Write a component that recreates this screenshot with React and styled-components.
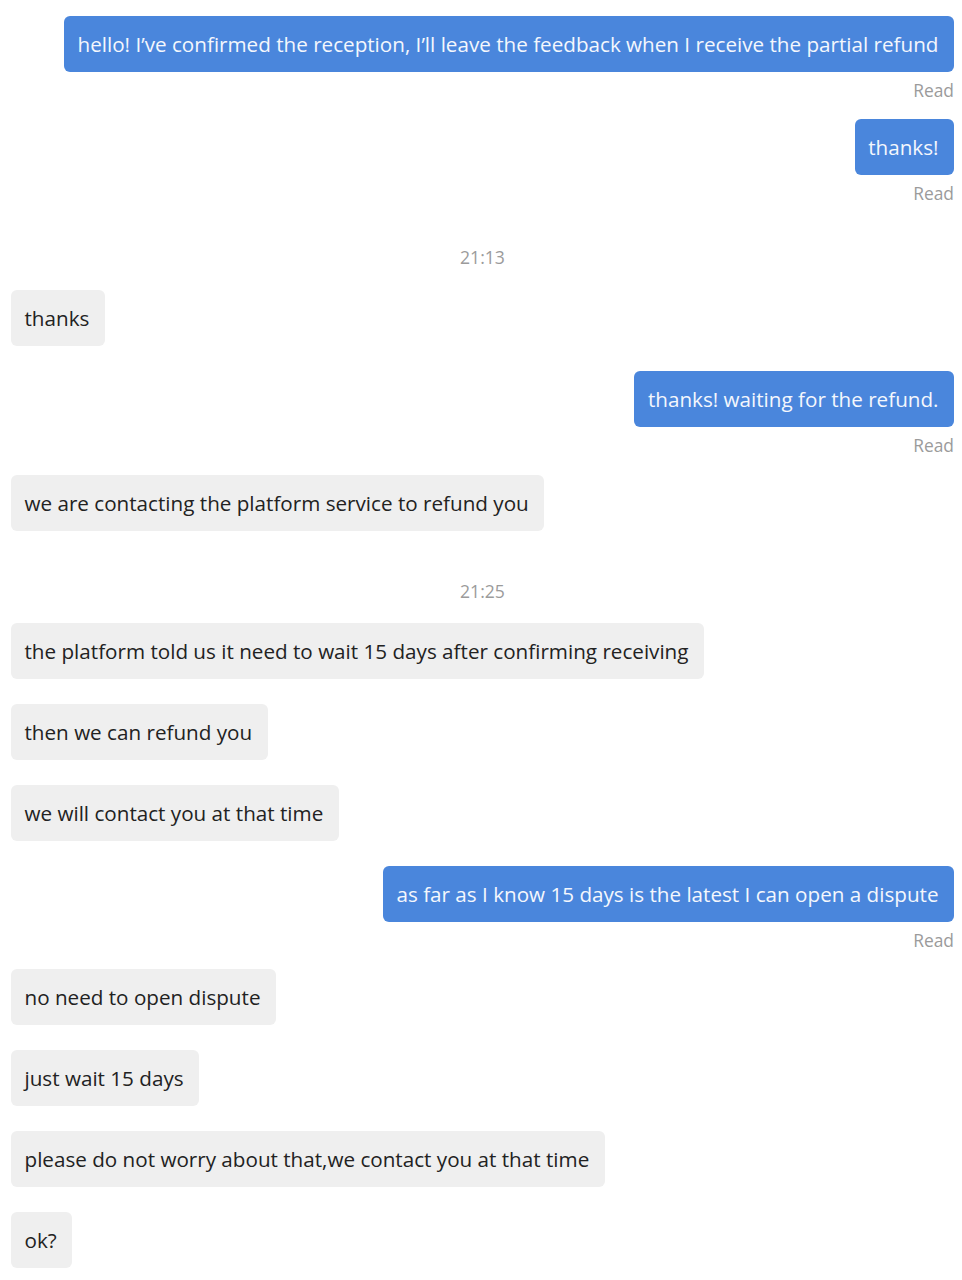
import React from 'react';
import styled, {createGlobalStyle} from 'styled-components';

const GlobalStyle = createGlobalStyle`
  html, body {
    margin: 0;
    padding: 0;
    background: #ffffff;
  }
  body {
    font-family: "Open Sans", "Noto Sans", sans-serif;
    -webkit-font-smoothing: antialiased;
  }
`;

// mt = space above the item, taken from the screenshot
const messages = [
    {type: 'out', text: 'hello! I\u2019ve confirmed the reception, I\u2019ll leave the feedback when I receive the partial refund', mt: 0},
    {type: 'read', mt: 7},
    {type: 'out', text: 'thanks!', mt: 18},
    {type: 'read', mt: 7},
    {type: 'time', text: '21:13', mt: 42},
    {type: 'in', text: 'thanks', mt: 22},
    {type: 'out', text: 'thanks! waiting for the refund.', mt: 25},
    {type: 'read', mt: 7},
    {type: 'in', text: 'we are contacting the platform service to refund you', mt: 19},
    {type: 'time', text: '21:25', mt: 49},
    {type: 'in', text: 'the platform told us it need to wait 15 days after confirming receiving', mt: 21},
    {type: 'in', text: 'then we can refund you', mt: 25},
    {type: 'in', text: 'we will contact you at that time', mt: 25},
    {type: 'out', text: 'as far as I know 15 days is the latest I can open a dispute', mt: 25},
    {type: 'read', mt: 7},
    {type: 'in', text: 'no need to open dispute', mt: 18},
    {type: 'in', text: 'just wait 15 days', mt: 25},
    {type: 'in', text: 'please do not worry about that,we contact you at that time', mt: 25},
    {type: 'in', text: 'ok?', mt: 25}
];

export default function App() {
    return (
        <>
            <GlobalStyle />
            <Chat>
                {messages.map((m, i) => {
                    if (m.type === 'read') {
                        return <ReadMark key={i} $mt={m.mt}>Read</ReadMark>;
                    }
                    if (m.type === 'time') {
                        return <TimeStamp key={i} $mt={m.mt}>{m.text}</TimeStamp>;
                    }
                    const mine = m.type === 'out';
                    return (
                        <Row key={i} $mine={mine} $mt={m.mt}>
                            <Bubble $mine={mine}>{m.text}</Bubble>
                        </Row>
                    );
                })}
            </Chat>
        </>
    );
}

const Chat = styled.div`
  display: flex;
  flex-direction: column;
  padding: 16px 8px 11px 11px;
  width: 962px;
  box-sizing: border-box;
`;

const Row = styled.div`
  display: flex;
  justify-content: ${p => (p.$mine ? 'flex-end' : 'flex-start')};
  margin-top: ${p => p.$mt}px;
`;

const Bubble = styled.div`
  height: 56px;
  box-sizing: border-box;
  padding: 14px 15.5px 14px 13.5px;
  border-radius: 6px;
  font-size: 20.65px;
  line-height: 28px;
  white-space: nowrap;
  background: ${p => (p.$mine ? '#4a86dc' : '#efefef')};
  color: ${p => (p.$mine ? '#f4f7fd' : '#222222')};
`;

const ReadMark = styled.div`
  align-self: flex-end;
  margin-top: ${p => p.$mt}px;
  font-size: 17.4px;
  line-height: 22px;
  color: #9b9b9b;
`;

const TimeStamp = styled.div`
  align-self: center;
  margin-top: ${p => p.$mt}px;
  font-size: 17.6px;
  line-height: 22px;
  color: #9b9b9b;
`;
